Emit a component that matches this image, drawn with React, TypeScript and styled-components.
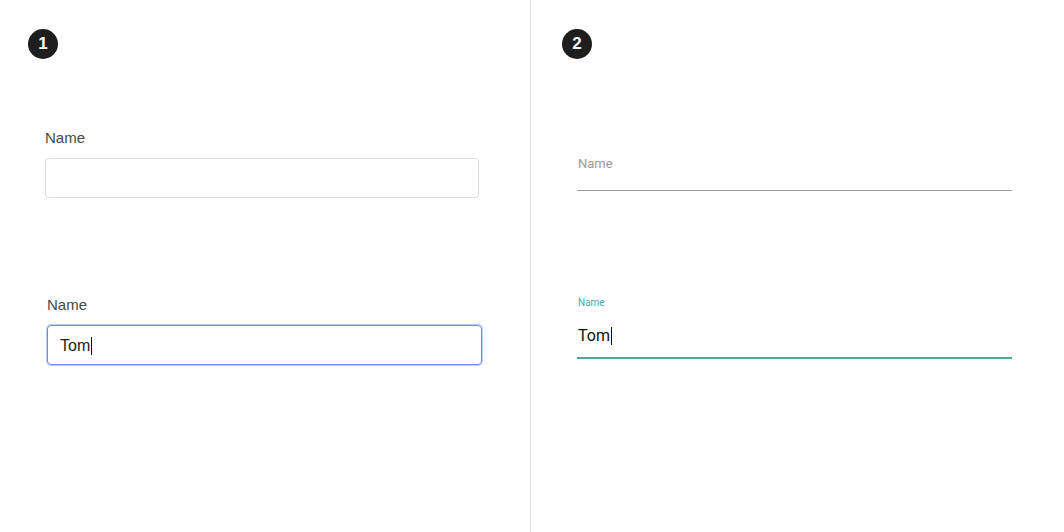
import React from "react";
import styled, { createGlobalStyle } from "styled-components";

const Global = createGlobalStyle`
  html, body { margin: 0; padding: 0; background: #fff; }
  body { font-family: "Liberation Sans", Arial, sans-serif; }
`;

const Page = styled.div`
  display: flex;
  height: 532px;
  width: 1064px;
  overflow: hidden;
`;

const Panel = styled.section<{ $w?: number; $divider?: boolean; $padLeft: number }>`
  display: flex;
  flex-direction: column;
  box-sizing: border-box;
  width: ${(p) => (p.$w ? `${p.$w}px` : "auto")};
  flex: ${(p) => (p.$w ? "none" : "1")};
  padding: 29px 0 0 ${(p) => p.$padLeft}px;
  border-right: ${(p) => (p.$divider ? "1px solid #e2e2e2" : "none")};
`;

const Badge = styled.div`
  width: 30px;
  height: 30px;
  border-radius: 50%;
  background: #1e1e1e;
  color: #fff;
  display: flex;
  align-items: center;
  justify-content: center;
  font-family: "Liberation Sans", Arial, sans-serif;
  font-weight: 700;
  font-size: 17px;
`;

const BoxGroup = styled.div<{ $top: number; $left: number; $width: number }>`
  display: flex;
  flex-direction: column;
  gap: 11px;
  margin-top: ${(p) => p.$top}px;
  margin-left: ${(p) => p.$left}px;
  width: ${(p) => p.$width}px;
`;

const BoxLabel = styled.label`
  font-size: 15px;
  line-height: 18px;
  color: #474747;
`;

const BoxInput = styled.div<{ $focused?: boolean }>`
  box-sizing: border-box;
  height: 40px;
  border-radius: 4px;
  border: 1px solid ${(p) => (p.$focused ? "#6f8af2" : "#dcdcdc")};
  box-shadow: ${(p) => (p.$focused ? "0 0 0 1px rgba(111,138,242,0.45)" : "none")};
  display: flex;
  align-items: center;
  padding: 2px 12px 0;
  font-size: 16px;
  color: #222;
`;

const Caret = styled.span`
  display: inline-block;
  width: 1px;
  height: 18px;
  background: #111;
  margin-left: 1px;
`;

const LineGroup = styled.div<{ $top: number }>`
  display: flex;
  flex-direction: column;
  margin-top: ${(p) => p.$top}px;
  margin-left: 15px;
  width: 435px;
`;

const LineLabel = styled.label<{ $floated?: boolean }>`
  font-family: Roboto, "Liberation Sans", sans-serif;
  font-size: ${(p) => (p.$floated ? "10px" : "13px")};
  line-height: ${(p) => (p.$floated ? "12px" : "16px")};
  color: ${(p) => (p.$floated ? "#4fa89b" : "#9a9a9a")};
  margin-left: 1px;
`;

const LineValue = styled.div`
  font-family: Roboto, "Liberation Sans", sans-serif;
  font-size: 16px;
  line-height: 20px;
  color: #111;
  display: flex;
  align-items: center;
  margin: 17px 0 0 1px;
`;

const Underline = styled.div<{ $active?: boolean; $gap: number }>`
  margin-top: ${(p) => p.$gap}px;
  height: ${(p) => (p.$active ? "2px" : "1px")};
  background: ${(p) => (p.$active ? "#4fa89b" : "#9c9c9c")};
`;

export default function App() {
  return (
    <>
      <Global />
      <Page>
        <Panel $w={531} $divider $padLeft={28}>
          <Badge>1</Badge>
          <BoxGroup $top={70} $left={17} $width={434}>
            <BoxLabel>Name</BoxLabel>
            <BoxInput />
          </BoxGroup>
          <BoxGroup $top={98} $left={19} $width={435}>
            <BoxLabel>Name</BoxLabel>
            <BoxInput $focused>
              Tom<Caret />
            </BoxInput>
          </BoxGroup>
        </Panel>
        <Panel $padLeft={31}>
          <Badge>2</Badge>
          <LineGroup $top={97}>
            <LineLabel>Name</LineLabel>
            <Underline $gap={18} />
          </LineGroup>
          <LineGroup $top={106}>
            <LineLabel $floated>Name</LineLabel>
            <LineValue>
              Tom<Caret />
            </LineValue>
            <Underline $active $gap={11} />
          </LineGroup>
        </Panel>
      </Page>
    </>
  );
}
